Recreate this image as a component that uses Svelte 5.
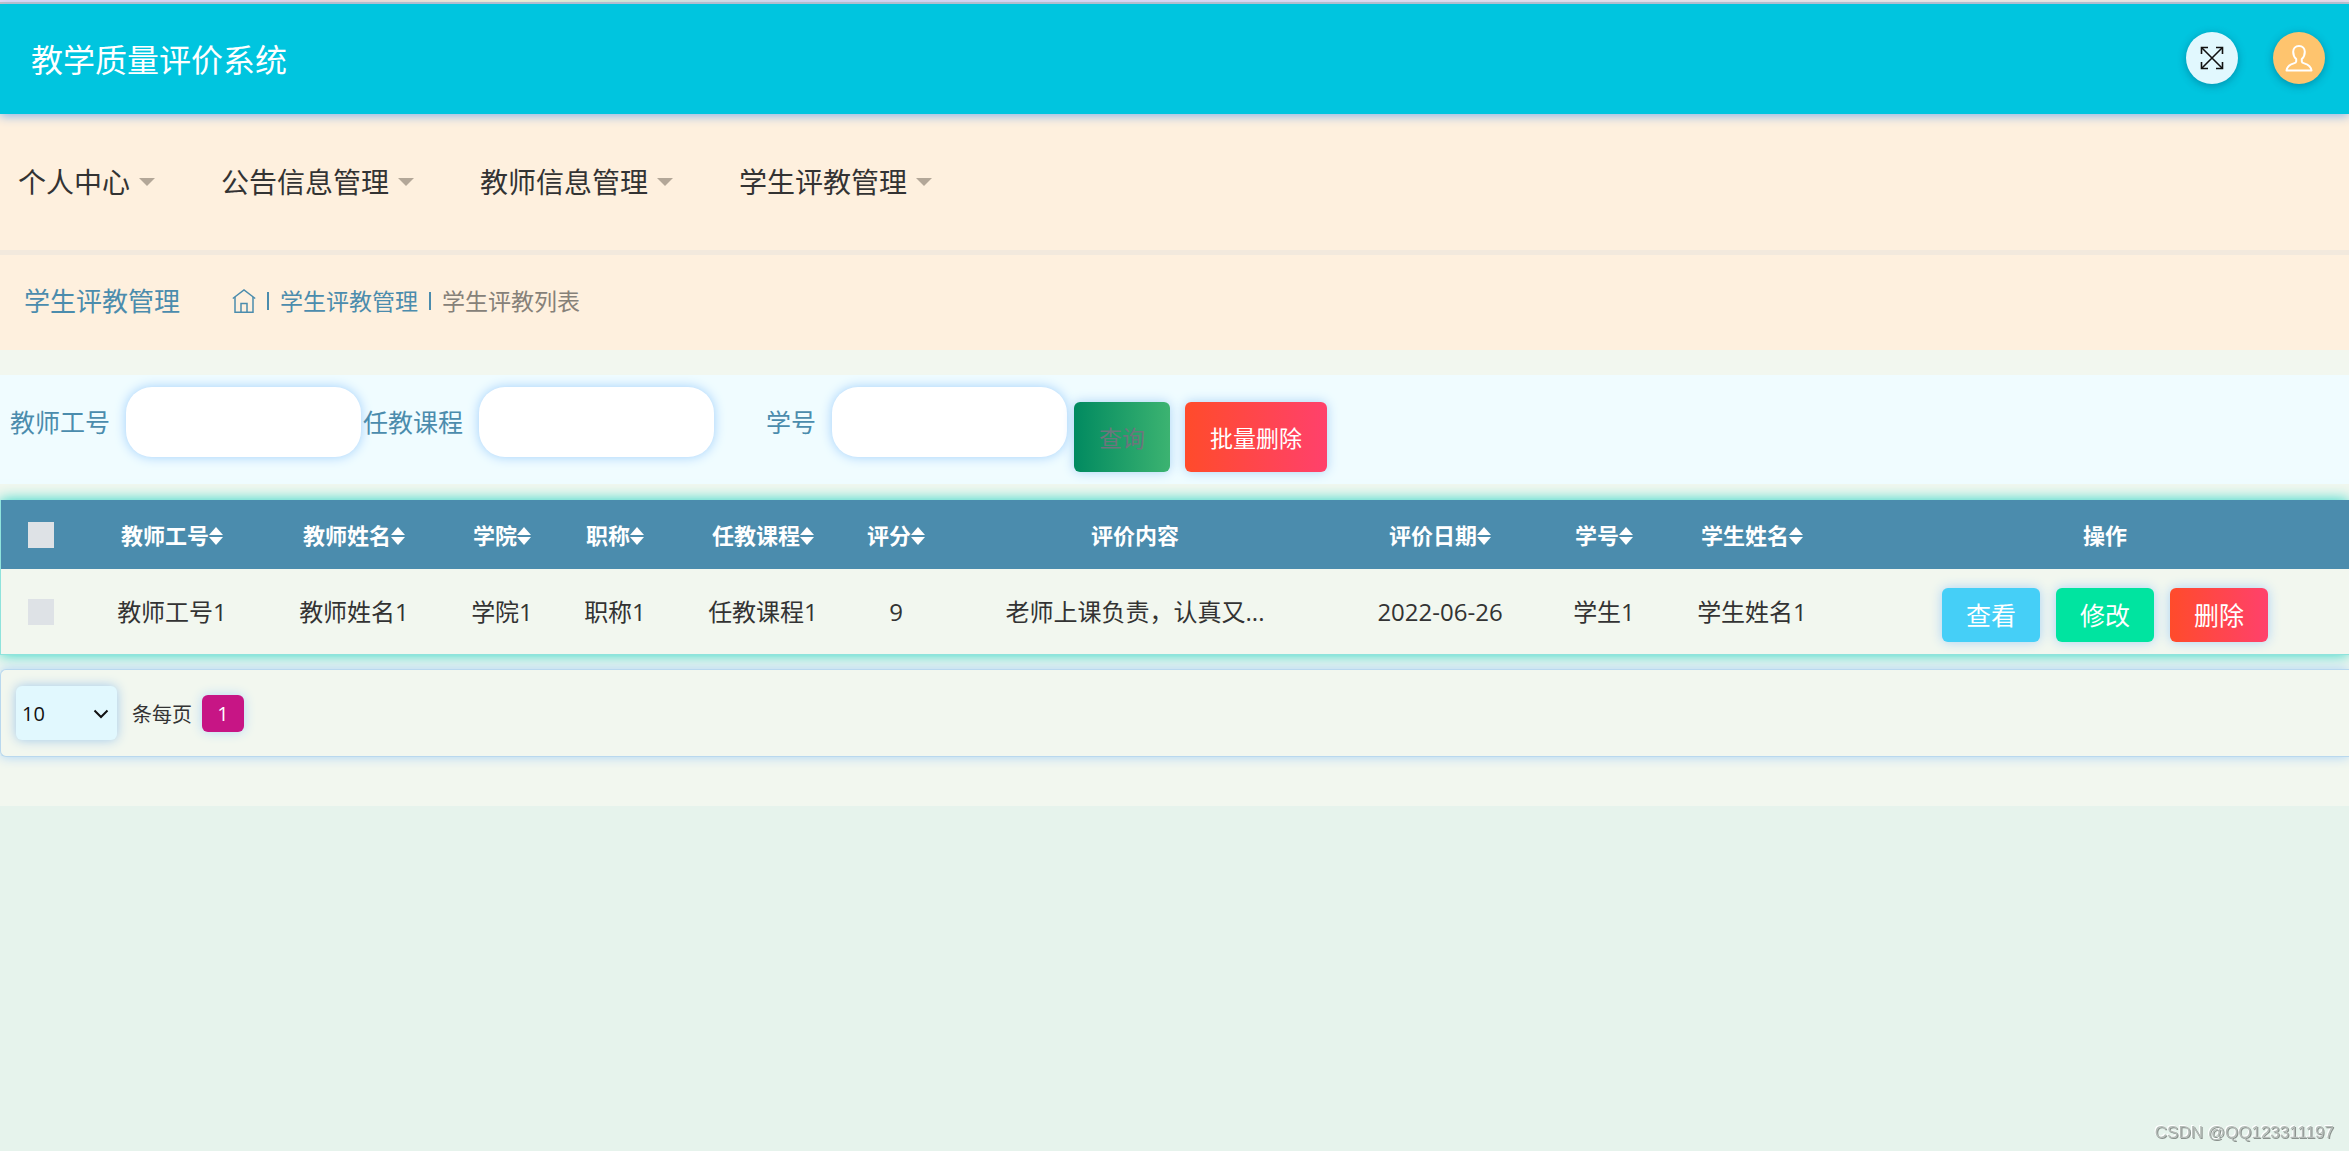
<script>
  const menus = ['个人中心', '公告信息管理', '教师信息管理', '学生评教管理'];

  const filters = [
    { id: 'teacher-no', label: '教师工号' },
    { id: 'course', label: '任教课程' },
    { id: 'student-no', label: '学号' }
  ];

  const columns = [
    { key: 'teacherNo', label: '教师工号', sortable: true, width: 182 },
    { key: 'teacherName', label: '教师姓名', sortable: true, width: 182 },
    { key: 'college', label: '学院', sortable: true, width: 114 },
    { key: 'rank', label: '职称', sortable: true, width: 112 },
    { key: 'course', label: '任教课程', sortable: true, width: 184 },
    { key: 'score', label: '评分', sortable: true, width: 82 },
    { key: 'content', label: '评价内容', sortable: false, width: 396 },
    { key: 'date', label: '评价日期', sortable: true, width: 214 },
    { key: 'studentNo', label: '学号', sortable: true, width: 114 },
    { key: 'studentName', label: '学生姓名', sortable: true, width: 182 }
  ];

  const rows = [
    {
      teacherNo: '教师工号1',
      teacherName: '教师姓名1',
      college: '学院1',
      rank: '职称1',
      course: '任教课程1',
      score: '9',
      content: '老师上课负责，认真又...',
      date: '2022-06-26',
      studentNo: '学生1',
      studentName: '学生姓名1'
    }
  ];
</script>

<div class="page">
  <div class="strip"></div>
  <header class="topbar">
    <h1>教学质量评价系统</h1>
    <div class="tools">
      <button class="round expand" aria-label="全屏">
        <svg width="24" height="24" viewBox="0 0 24 24" fill="none" stroke="currentColor" stroke-width="1.6">
          <path d="M1.5 1.5 22.5 22.5M22.5 1.5 1.5 22.5" />
          <path d="M1.5 8V1.5H8M16 1.5h6.5V8M22.5 16v6.5H16M8 22.5H1.5V16" />
        </svg>
      </button>
      <button class="round user" aria-label="用户">
        <svg width="28" height="28" viewBox="0 0 28 28" fill="none" stroke="currentColor" stroke-width="2" stroke-linejoin="round">
          <path d="M14 2C10.400 2 8.200 4.400 8.200 7.800c0 3.400 1 5.600 3 7.200v2.400c0 1-.8 1.500-2.400 2C4.800 20.600 2 22.400 1.500 26.500h25c-.5-4.100-3.300-5.900-7.300-7.100-1.600-.5-2.400-1-2.400-2V15c2-1.600 3-3.800 3-7.200C19.800 4.400 17.600 2 14 2Z" />
        </svg>
      </button>
    </div>
  </header>

  <nav class="menu" aria-label="主菜单">
    {#each menus as item}
      <button class="menu-item">{item}<span class="caret"></span></button>
    {/each}
  </nav>

  <section class="crumb-bar">
    <h2>学生评教管理</h2>
    <nav class="crumbs" aria-label="面包屑">
      <a href="#home" aria-label="首页">
        <svg width="24" height="26" viewBox="0 0 24 26" fill="none" stroke="currentColor" stroke-width="1.5">
          <path d="M.8 10.500 12 2l11.200 8.500" />
          <path d="M3 9v15.200h18V9" />
          <path d="M9 24v-8.500h6V24" />
        </svg>
      </a>
      <span class="bar"></span>
      <a href="#evaluations">学生评教管理</a>
      <span class="bar"></span>
      <span class="current">学生评教列表</span>
    </nav>
  </section>

  <main>
    <form class="filters" onsubmit={(e) => e.preventDefault()}>
      {#each filters as f}
        <div class="field">
          <label for={f.id}>{f.label}</label>
          <input id={f.id} type="text" />
        </div>
      {/each}
      <div class="actions">
        <button class="btn search" type="submit">查询</button>
        <button class="btn danger" type="button">批量删除</button>
      </div>
    </form>

    <table>
      <colgroup>
        <col style:width="80px" />
        {#each columns as c}
          <col style:width="{c.width}px" />
        {/each}
        <col style:width="506px" />
      </colgroup>
      <thead>
        <tr>
          <th><input type="checkbox" aria-label="全选" /></th>
          {#each columns as c}
            <th>
              {c.label}{#if c.sortable}<svg class="sort" width="14" height="18" viewBox="0 0 14 18" fill="currentColor"><path d="M7 0 14 8H0ZM7 18 0 10h14Z" /></svg>{/if}
            </th>
          {/each}
          <th class="ops">操作</th>
        </tr>
      </thead>
      <tbody>
        {#each rows as row}
          <tr>
            <td><input type="checkbox" aria-label="选择此行" /></td>
            {#each columns as c}
              <td>{row[c.key]}</td>
            {/each}
            <td class="ops">
              <div class="row-actions">
                <button class="btn small view">查看</button>
                <button class="btn small edit">修改</button>
                <button class="btn small danger">删除</button>
              </div>
            </td>
          </tr>
        {/each}
      </tbody>
    </table>

    <div class="pager">
      <div class="select">
        <select id="page-size">
          <option>10</option>
          <option>25</option>
          <option>50</option>
        </select>
        <svg width="16" height="10" viewBox="0 0 16 10" fill="none" stroke="currentColor" stroke-width="2"><path d="M1.500 1.500 8 8l6.500-6.500" /></svg>
      </div>
      <label for="page-size">条每页</label>
      <button class="page-no">1</button>
    </div>
  </main>

  <div class="watermark">CSDN @QQ123311197</div>
</div>

<style>
  :global(body) {
    background: #e6f3ec;
  }

  .page {
    min-height: 100vh;
    overflow-x: hidden;
    font-family: 'Open Sans', 'Noto Sans CJK SC', sans-serif;
    font-size: 24px;
    color: #333;
  }

  button,
  input,
  select {
    box-sizing: border-box;
    margin: 0;
    border: 0;
    font: inherit;
    color: inherit;
  }

  button {
    padding: 0;
    background: none;
    cursor: pointer;
  }

  h1,
  h2 {
    margin: 0;
    font-weight: 400;
  }

  .strip {
    height: 2px;
    border-bottom: 2px solid #c5c0c4;
    background: linear-gradient(90deg, #e6dcf5 0 11%, #f8d8d4 14%, #fdf6cf 22%, #dcefd0 26%, #dcd8f0 34%, #e6dcf5 50%, #fbeedd 88%, #f6dde6);
  }

  .topbar {
    position: relative;
    display: flex;
    align-items: flex-start;
    justify-content: space-between;
    box-sizing: border-box;
    height: 110px;
    padding: 28px 24px 0 31px;
    background: #00c5df;
    box-shadow: 0 2px 10px #8ab4e8;
    color: #fff;
  }

  h1 {
    padding-top: 8px;
    font-size: 32px;
    line-height: 40px;
  }

  .tools {
    display: flex;
    gap: 35px;
  }

  .round {
    display: flex;
    align-items: center;
    justify-content: center;
    width: 52px;
    height: 52px;
    border-radius: 50%;
    box-shadow: 0 2px 8px rgba(0, 80, 110, 0.45);
  }

  .expand {
    background: #e1f8fe;
    color: #111;
  }

  .user {
    background: #fec46e;
    color: #fff;
  }

  .menu {
    display: flex;
    align-items: center;
    gap: 66px;
    height: 136px;
    padding: 0 18px;
    background: #fef0de;
    border-bottom: 5px solid #f2e9dd;
  }

  .menu-item {
    display: flex;
    align-items: center;
    gap: 9px;
    font-size: 28px;
    line-height: 40px;
  }

  .caret {
    border: 8px solid transparent;
    border-top-color: #b3a798;
    border-bottom: 0;
  }

  .crumb-bar {
    display: flex;
    align-items: center;
    gap: 52px;
    height: 91px;
    padding: 0 24px 4px;
    background: #fef0de;
    color: #4b8cad;
  }

  h2 {
    font-size: 26px;
    line-height: 40px;
  }

  .crumbs {
    display: flex;
    align-items: center;
    gap: 11px;
    font-size: 23px;
    line-height: 36px;
  }

  .crumbs a {
    display: flex;
    align-items: center;
    color: inherit;
    text-decoration: none;
  }

  .bar {
    width: 2px;
    height: 18px;
    background: #4b8cad;
  }

  .current {
    color: #868179;
  }

  main {
    padding: 25px 0 49px;
    background: #f2f7ef;
  }

  .filters {
    display: flex;
    align-items: flex-start;
    height: 97px;
    padding: 12px 8px 0;
    background: #f0fcff;
    color: #4b8cad;
  }

  .field {
    display: flex;
    align-items: center;
  }

  .field label {
    width: 102px;
    margin-right: 16px;
    font-size: 25px;
    line-height: 36px;
    text-align: right;
    white-space: nowrap;
  }

  .field input {
    width: 235px;
    height: 70px;
    padding: 0 20px;
    border-radius: 26px;
    background: #fff;
    box-shadow: 0 0 12px #a0cffb;
  }

  .actions {
    display: flex;
    gap: 15px;
    margin: 15px 0 0 7px;
  }

  .btn {
    height: 70px;
    padding: 0 25px;
    border-radius: 6px;
    box-shadow: 0 0 12px #a9d2f6;
    color: #fff;
    font-size: 23px;
    white-space: nowrap;
  }

  .search {
    background: linear-gradient(90deg, #018a60, #3cb371);
    color: #6c757d;
  }

  .danger {
    background: linear-gradient(90deg, #ff4b2b, #ff416c);
  }

  table {
    width: 100%;
    margin-top: 16px;
    table-layout: fixed;
    border-collapse: separate;
    border-spacing: 0;
    border-left: 1px solid #8fe3dc;
    border-bottom: 1px solid #8fe3dc;
    box-shadow: 0 0 14px #22d3c5;
    text-align: center;
    line-height: 36px;
  }

  th,
  td {
    padding: 0;
    white-space: nowrap;
  }

  th {
    height: 69px;
    background: #4b8cad;
    color: #fff;
    font-size: 22px;
    font-weight: 700;
  }

  td {
    height: 85px;
    background: #f2f7ef;
  }

  th.ops,
  td.ops {
    padding-left: 18px;
  }

  .sort {
    vertical-align: -1px;
  }

  table input {
    display: block;
    width: 26px;
    height: 26px;
    margin: 0 auto;
    appearance: none;
    background: #dee2e6;
  }

  .row-actions {
    display: flex;
    justify-content: center;
    gap: 16px;
    padding-top: 6px;
  }

  .small {
    height: 54px;
    padding: 0 24px;
    font-size: 25px;
  }

  .view {
    background: #45cff7;
  }

  .edit {
    background: #00e4a0;
  }

  .pager {
    display: flex;
    align-items: center;
    height: 86px;
    margin: 14px 0 0;
    padding-left: 15px;
    border: 1px solid #b9d8ee;
    border-right: 0;
    border-radius: 6px 0 0 6px;
    background: #f2f7ef;
    box-shadow: 0 0 12px #a9d2f6;
    font-size: 20px;
  }

  .select {
    position: relative;
    color: #111;
  }

  .select svg {
    position: absolute;
    top: 23px;
    right: 8px;
    pointer-events: none;
  }

  select {
    display: block;
    width: 101px;
    height: 54px;
    padding: 0 6px;
    appearance: none;
    border-radius: 6px;
    background: #e1f8fe;
    box-shadow: 0 0 12px #a0c8ea;
  }

  .pager label {
    margin: 0 10px 0 15px;
  }

  .page-no {
    width: 42px;
    height: 37px;
    border-radius: 6px;
    background: #c71585;
    box-shadow: 0 0 12px #b4d8f6;
    color: #fff;
  }

  .watermark {
    position: fixed;
    right: 15px;
    bottom: 8px;
    font: 17px/20px 'Liberation Sans', sans-serif;
    color: #b4bbb7;
    text-shadow: 1px 1px 0 #8b928e, -1px -1px 0 #fff;
  }
</style>
